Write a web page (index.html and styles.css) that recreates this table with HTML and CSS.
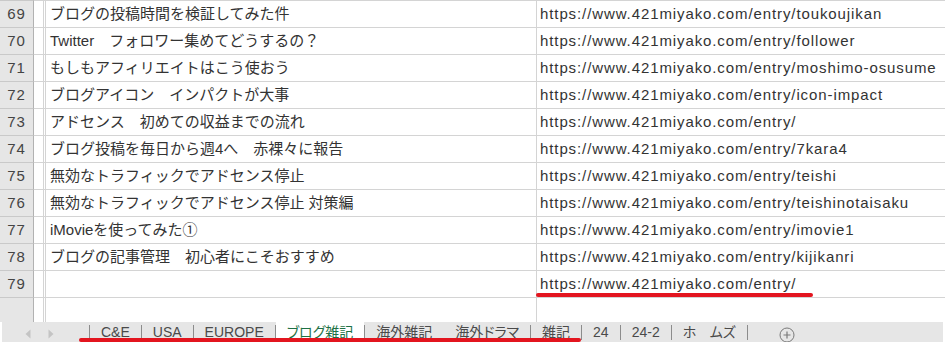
FILE: index.html
```html
<!DOCTYPE html>
<html lang="ja">
<head>
<meta charset="utf-8">
<title>Sheet</title>
<link rel="stylesheet" href="styles.css">
</head>
<body>
<div class="sheet">
  <div class="row"><div class="rh">69</div><div class="ca"></div><div class="cb"></div><div class="cc">ブログの投稿時間を検証してみた件</div><div class="cd">https://www.421miyako.com/entry/toukoujikan</div></div>
  <div class="row"><div class="rh">70</div><div class="ca"></div><div class="cb"></div><div class="cc">Twitter　フォロワー集めてどうするの？</div><div class="cd">https://www.421miyako.com/entry/follower</div></div>
  <div class="row"><div class="rh">71</div><div class="ca"></div><div class="cb"></div><div class="cc">もしもアフィリエイトはこう使おう</div><div class="cd">https://www.421miyako.com/entry/moshimo-osusume</div></div>
  <div class="row"><div class="rh">72</div><div class="ca"></div><div class="cb"></div><div class="cc">ブログアイコン　インパクトが大事</div><div class="cd">https://www.421miyako.com/entry/icon-impact</div></div>
  <div class="row"><div class="rh">73</div><div class="ca"></div><div class="cb"></div><div class="cc">アドセンス　初めての収益までの流れ</div><div class="cd">https://www.421miyako.com/entry/</div></div>
  <div class="row"><div class="rh">74</div><div class="ca"></div><div class="cb"></div><div class="cc">ブログ投稿を毎日から週4へ　赤裸々に報告</div><div class="cd">https://www.421miyako.com/entry/7kara4</div></div>
  <div class="row"><div class="rh">75</div><div class="ca"></div><div class="cb"></div><div class="cc">無効なトラフィックでアドセンス停止</div><div class="cd">https://www.421miyako.com/entry/teishi</div></div>
  <div class="row"><div class="rh">76</div><div class="ca"></div><div class="cb"></div><div class="cc">無効なトラフィックでアドセンス停止 対策編</div><div class="cd">https://www.421miyako.com/entry/teishinotaisaku</div></div>
  <div class="row"><div class="rh">77</div><div class="ca"></div><div class="cb"></div><div class="cc">iMovieを使ってみた①</div><div class="cd">https://www.421miyako.com/entry/imovie1</div></div>
  <div class="row"><div class="rh">78</div><div class="ca"></div><div class="cb"></div><div class="cc">ブログの記事管理　初心者にこそおすすめ</div><div class="cd">https://www.421miyako.com/entry/kijikanri</div></div>
  <div class="row"><div class="rh">79</div><div class="ca"></div><div class="cb"></div><div class="cc"></div><div class="cd">https://www.421miyako.com/entry/</div></div>
  <div class="row tail"><div class="rh"></div><div class="ca"></div><div class="cb"></div><div class="cc"></div><div class="cd"></div></div>
</div>
<div class="tabbar">
  <div class="nav">
    <svg class="arrow" width="6" height="10" viewBox="0 0 6 10"><polygon points="5.5,0.5 0.5,5 5.5,9.5"/></svg>
    <svg class="arrow" width="6" height="10" viewBox="0 0 6 10"><polygon points="0.5,0.5 5.5,5 0.5,9.5"/></svg>
  </div>
  <span class="sep"></span><div class="tab">C&amp;E</div>
  <span class="sep"></span><div class="tab">USA</div>
  <span class="sep"></span><div class="tab">EUROPE</div>
  <span class="sep"></span><div class="tab active">ブログ雑記</div>
  <span class="sep"></span><div class="tab">海外雑記</div>
  <span class="sep off"></span><div class="tab">海外ドラマ</div>
  <span class="sep"></span><div class="tab">雑記</div>
  <span class="sep"></span><div class="tab">24</div>
  <span class="sep"></span><div class="tab">24-2</div>
  <span class="sep"></span><div class="tab">ホ<span class="faint">ー</span>ムズ</div>
  <span class="sep"></span>
  <svg class="add" width="16" height="16" viewBox="0 0 16 16"><circle cx="8" cy="8" r="7" fill="none" stroke="#7a7a7a" stroke-width="1"/><path d="M8 4.5v7M4.5 8h7" stroke="#7a7a7a" stroke-width="1.2"/></svg>
</div>
<div class="mark mark-url"></div>
<div class="mark mark-tabs"></div>
</body>
</html>
```
FILE: styles.css
```css
* { box-sizing: border-box; }
body {
  margin: 0;
  width: 945px;
  height: 359px;
  overflow: hidden;
  position: relative;
  background: #fff;
  font-family: "Liberation Sans", "Noto Sans CJK JP", sans-serif;
}
.sheet { display: flex; flex-direction: column; }
.row { display: flex; height: 27px; }
.row.tail { height: 25px; }
.row > div {
  border-top: 1px solid #d4d4d4;
  border-right: 1px solid #d4d4d4;
  height: 100%;
}
.rh {
  width: 34px;
  flex: none;
  background: #e6e6e6;
  border-top-color: #c9c9c9 !important;
  border-right-color: #b2b2b2 !important;
  text-align: center;
  font-size: 15px;
  letter-spacing: 1px;
  line-height: 25px;
  color: #444;
}
.ca { width: 10px; flex: none; }
.cb { width: 2px; flex: none; }
.cc {
  width: 491px;
  flex: none;
  padding-left: 4px;
  font-size: 15px;
  line-height: 25px;
  color: #333;
  white-space: nowrap;
  overflow: hidden;
}
.cd {
  flex: 1;
  border-right: none !important;
  padding-left: 3px;
  font-size: 15px;
  letter-spacing: 0.9px;
  line-height: 25px;
  color: #333;
  white-space: nowrap;
  overflow: hidden;
}
.tabbar {
  display: flex;
  height: 20px;
  margin-left: 2px;
  width: 941px;
  background: #e6e6e6;
  overflow: hidden;
  font-size: 14px;
  color: #4a4a4a;
  font-feature-settings: "palt";
}
.nav {
  width: 87px;
  flex: none;
  display: flex;
  align-items: center;
  padding-left: 23px;
  padding-top: 3px;
  gap: 17px;
}
.arrow { fill: #c4c4c4; display: block; }
.sep {
  width: 1px;
  height: 15px;
  margin-top: 3px;
  background: #8c8c8c;
  flex: none;
}
.sep.off { background: transparent; }
.tab {
  padding: 0 11px;
  line-height: 20px;
  white-space: nowrap;
  flex: none;
}
.tab.active { background: #fff; color: #1e7145; }
.faint { color: #e6e6e6; }
.add { display: block; flex: none; margin-left: 31px; margin-top: 5px; }
.mark {
  position: absolute;
  background: #e3151f;
  border-radius: 2px;
}
.mark-url { left: 536px; top: 293px; width: 277px; height: 4px; }
.mark-tabs { left: 79px; top: 338px; width: 502px; height: 4px; }
```
